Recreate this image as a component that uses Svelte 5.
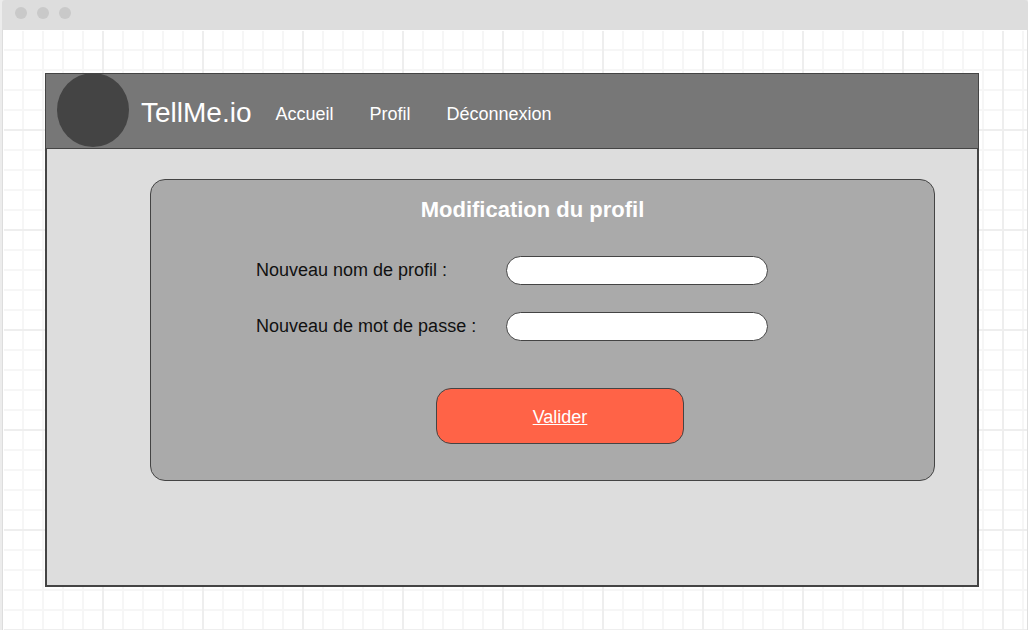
<script>
  const links = ['Accueil', 'Profil', 'Déconnexion'];
  const fields = [
    { id: 'profile-name', label: 'Nouveau nom de profil :', type: 'text' },
    { id: 'password', label: 'Nouveau de mot de passe :', type: 'password' },
  ];
</script>

<div class="browser">
  <div class="titlebar">
    <span class="dot"></span>
    <span class="dot"></span>
    <span class="dot"></span>
  </div>
  <div class="canvas">
    <div class="app">
      <header>
        <span class="avatar"></span>
        <span class="brand">TellMe.io</span>
        <nav>
          {#each links as link}
            <a href="#{link}">{link}</a>
          {/each}
        </nav>
      </header>
      <main>
        <form class="card">
          <h1>Modification du profil</h1>
          <div class="fields">
            {#each fields as field}
              <label for={field.id}>{field.label}</label>
              <input id={field.id} type={field.type} />
            {/each}
          </div>
          <div class="actions">
            <button type="button">Valider</button>
          </div>
        </form>
      </main>
    </div>
  </div>
</div>

<style>
  :global(body) {
    margin: 0;
    background: #ececec;
    font-family: 'Liberation Sans', Arial, sans-serif;
  }

  .browser,
  .browser * {
    box-sizing: border-box;
  }

  .browser {
    display: flex;
    flex-direction: column;
    min-height: 100vh;
    padding-left: 2px;
  }

  .titlebar {
    display: flex;
    gap: 10px;
    height: 30px;
    padding: 7px 13px;
    background: #dddddd;
    border-radius: 3px 3px 0 0;
  }

  .dot {
    width: 12px;
    height: 12px;
    border-radius: 50%;
    background: #c9c9c9;
  }

  .canvas {
    flex: 1;
    padding: 43px 48px 43px 42px;
    border: solid #dddddd;
    border-width: 0 1px;
    box-shadow: inset 1px 1px #ffffff;
    background-color: #ffffff;
    background-image:
      linear-gradient(90deg, #eeeeee 2px, transparent 2px),
      linear-gradient(#eeeeee 2px, transparent 2px),
      linear-gradient(90deg, #f6f6f6 2px, transparent 2px),
      linear-gradient(#f6f6f6 2px, transparent 2px);
    background-size:
      100px 100px,
      100px 100px,
      20px 20px,
      20px 20px;
    background-position: -1px -1px;
  }

  .app {
    background: #dddddd;
  }

  header {
    display: flex;
    align-items: center;
    height: 76px;
    padding: 0 11px;
    border: 1px solid #444444;
    background: #777777;
    color: #ffffff;
  }

  .avatar {
    width: 72px;
    height: 74px;
    margin-bottom: 2px;
    border-radius: 50%;
    background: #444444;
  }

  .brand {
    margin-left: 12px;
    padding-top: 3px;
    font-size: 28px;
    line-height: 32px;
  }

  nav {
    display: flex;
    gap: 36px;
    margin-left: 24px;
    padding-top: 6px;
    font-size: 18px;
    line-height: 20px;
  }

  nav a {
    color: inherit;
    text-decoration: none;
  }

  main {
    padding: 30px 42px 104px 103px;
    border: solid #444444;
    border-width: 0 2px 2px;
  }

  .card {
    padding: 16px 0 36px;
    border: 1px solid #444444;
    border-radius: 15px;
    background: #aaaaaa;
  }

  h1 {
    margin: 0;
    padding-right: 20px;
    color: #ffffff;
    font-size: 22px;
    font-weight: bold;
    line-height: 28px;
    text-align: center;
  }

  .fields {
    display: grid;
    grid-template-columns: 250px 1fr;
    row-gap: 27px;
    align-items: center;
    margin-top: 32px;
    padding: 0 166px 0 105px;
  }

  label {
    padding-bottom: 2px;
    color: #111111;
    font-size: 18px;
    line-height: 20px;
    white-space: nowrap;
  }

  input {
    width: 100%;
    height: 29px;
    margin: 0;
    padding: 0 14px;
    border: 1px solid #444444;
    border-radius: 15px;
    background: #ffffff;
    font: inherit;
    font-size: 18px;
  }

  .actions {
    display: flex;
    justify-content: center;
    margin-top: 47px;
    padding-left: 35px;
  }

  button {
    width: 248px;
    height: 56px;
    padding: 2px 0 0;
    border: 1px solid #444444;
    border-radius: 15px;
    background: #ff6347;
    color: #ffffff;
    font: inherit;
    font-size: 18px;
    text-decoration: underline;
  }
</style>
